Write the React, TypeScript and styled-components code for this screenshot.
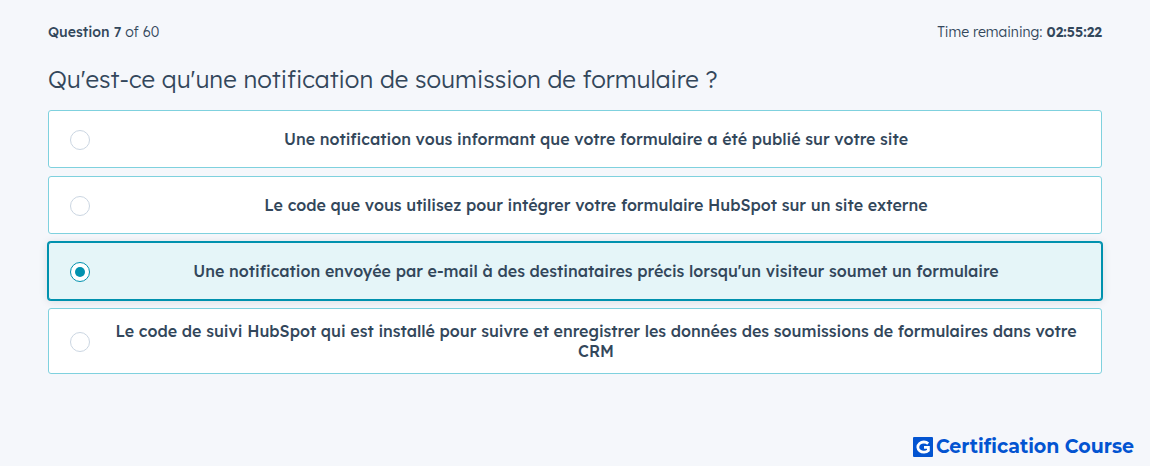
import React, { useState } from "react";
import styled, { createGlobalStyle } from "styled-components";

const GlobalStyle = createGlobalStyle`
  *, *::before, *::after { box-sizing: border-box; }
  body {
    margin: 0;
    background: #f5f7fb;
    color: #33475b;
    font-family: Lexend, "Lexend Deca", Inter, "Liberation Sans", sans-serif;
  }
`;

const Page = styled.main`
  display: flex;
  flex-direction: column;
  min-height: 100vh;
  padding: 22px 48px 7px;
`;

const StatusBar = styled.header`
  display: flex;
  justify-content: space-between;
  font-size: 14px;
  line-height: 20px;
  font-weight: 300;
`;

const Strong = styled.b<{ $weight: number }>`
  font-weight: ${(p) => p.$weight};
`;

const Title = styled.h1`
  margin: 20px 0 14px;
  font-size: 24px;
  line-height: 34px;
  font-weight: 300;
`;

const Options = styled.div`
  display: flex;
  flex-direction: column;
  gap: 8px;
`;

const Option = styled.label<{ $selected: boolean }>`
  display: flex;
  align-items: center;
  gap: 22px;
  min-height: 58px;
  padding: 12px 21px;
  border: 1px solid ${(p) => (p.$selected ? "#0091ae" : "#7fd1de")};
  border-radius: 3px;
  background: ${(p) => (p.$selected ? "#e5f5f8" : "#ffffff")};
  box-shadow: ${(p) =>
    p.$selected ? "0 0 0 1px #0091ae, 0 1px 8px 1px rgba(0, 0, 0, 0.1)" : "none"};
  cursor: pointer;
`;

const Radio = styled.input`
  appearance: none;
  flex: none;
  display: grid;
  place-items: center;
  width: 20px;
  height: 20px;
  margin: 2px 0 0;
  border: 1px solid #cbd6e2;
  border-radius: 50%;
  background: #ffffff;

  &:checked {
    border-color: #0091ae;
  }

  &:checked::before {
    content: "";
    width: 10px;
    height: 10px;
    border-radius: 50%;
    background: #0091ae;
  }
`;

const OptionText = styled.span`
  flex: 1;
  text-align: center;
  font-size: 16px;
  line-height: 20px;
  font-weight: 500;
`;

const Brand = styled.footer`
  display: flex;
  align-items: center;
  justify-content: flex-end;
  gap: 3px;
  margin: auto -32px 0 0;
  color: #0354d1;
  font-family: Montserrat, Inter, sans-serif;
  font-size: 19px;
  line-height: 24px;
  font-weight: 700;
`;

const answers = [
  "Une notification vous informant que votre formulaire a été publié sur votre site",
  "Le code que vous utilisez pour intégrer votre formulaire HubSpot sur un site externe",
  "Une notification envoyée par e-mail à des destinataires précis lorsqu'un visiteur soumet un formulaire",
  "Le code de suivi HubSpot qui est installé pour suivre et enregistrer les données des soumissions de formulaires dans votre CRM",
];

function BrandMark() {
  return (
    <svg width="20" height="20" viewBox="0 0 20 20" aria-hidden="true">
      <rect width="20" height="20" rx="1" fill="#0354d1" />
      <path
        d="M15.2 6.6A6 5.1 0 1 0 15.4 13.4V10.4H11"
        fill="none"
        stroke="#ffffff"
        strokeWidth="2.8"
      />
    </svg>
  );
}

export default function App() {
  const [selected, setSelected] = useState(2);
  return (
    <>
      <GlobalStyle />
      <Page>
        <StatusBar>
          <span>
            <Strong $weight={500}>Question 7</Strong> of 60
          </span>
          <span>
            Time remaining: <Strong $weight={600}>02:55:22</Strong>
          </span>
        </StatusBar>
        <Title id="question">Qu'est-ce qu'une notification de soumission de formulaire ?</Title>
        <Options role="radiogroup" aria-labelledby="question">
          {answers.map((answer, index) => (
            <Option key={answer} $selected={selected === index}>
              <Radio
                type="radio"
                name="answer"
                checked={selected === index}
                onChange={() => setSelected(index)}
              />
              <OptionText>{answer}</OptionText>
            </Option>
          ))}
        </Options>
        <Brand>
          <BrandMark />
          <span>Certification Course</span>
        </Brand>
      </Page>
    </>
  );
}
